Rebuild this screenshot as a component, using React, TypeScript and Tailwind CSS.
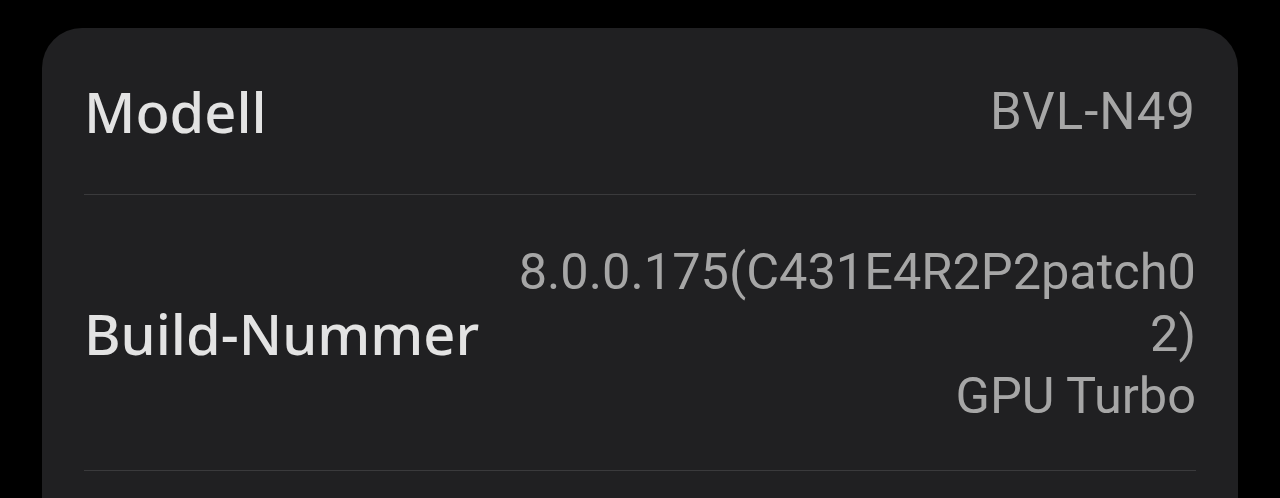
export default function App() {
  return (
    <div className="h-[498px] w-full bg-black px-[42px] pt-[28px] overflow-hidden">
      <div className="rounded-[40px] bg-[#202022] px-[42px] h-[540px]">
        <div className="flex h-[167px] items-center justify-between border-b border-[#3a3a3c]">
          <span className="text-[56px] font-medium leading-none text-[#e3e3e3]" style={{ fontFamily: '"Noto Sans", sans-serif' }}>Modell</span>
          <span className="text-[51px] leading-none text-[#a6a6a6] tracking-[1px]" style={{ fontFamily: 'Roboto, sans-serif' }}>BVL-N49</span>
        </div>
        <div className="flex h-[276px] items-center justify-between border-b border-[#3a3a3c]">
          <span className="text-[56px] font-medium leading-none text-[#e3e3e3]" style={{ fontFamily: '"Noto Sans", sans-serif' }}>Build-Nummer</span>
          <div className="w-[700px] text-right text-[50.5px] leading-[62px] text-[#a6a6a6] pt-[2px]" style={{ fontFamily: 'Roboto, sans-serif' }}>
            <div>8.0.0.175(C431E4R2P2patch0</div>
            <div>2)</div>
            <div>GPU Turbo</div>
          </div>
        </div>
      </div>
    </div>
  );
}
